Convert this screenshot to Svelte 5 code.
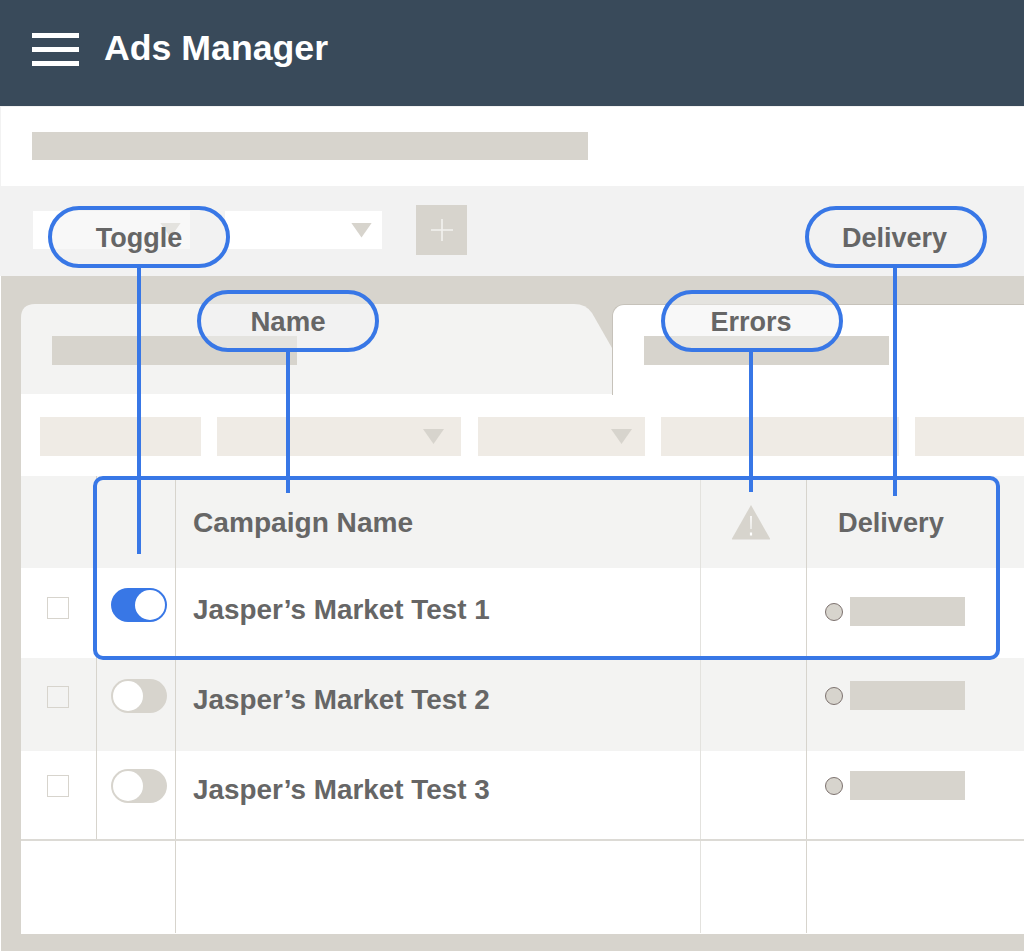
<script>
    const chips = [
        { name: "status", caret: false },
        { name: "objective", caret: true },
        { name: "budget", caret: true },
        { name: "date", caret: false },
        { name: "more", caret: false }
    ];

    const rows = [
        { name: "Jasper’s Market Test 1", on: true },
        { name: "Jasper’s Market Test 2", on: false },
        { name: "Jasper’s Market Test 3", on: false }
    ];

    const callouts = ["Toggle", "Name", "Errors", "Delivery"];
</script>

<div class="page">
    <header class="topbar">
        <div class="burger"><span></span><span></span><span></span></div>
        <h1>Ads Manager</h1>
    </header>

    <section class="title-row">
        <div class="title-bar"></div>
    </section>

    <section class="filter-row">
        <div class="select first"><i class="caret"></i></div>
        <div class="select second"><i class="caret"></i></div>
        <div class="add">
            <svg width="22" height="22" viewBox="0 0 22 22">
                <path d="M0 11H22M11 0V22" stroke="#f3f2ef" stroke-width="1.6" fill="none" />
            </svg>
        </div>
    </section>

    <section class="panel">
        <div class="sheet">
            <div class="tabs">
                <div class="tab back"><div class="ph"></div></div>
                <div class="tab front"><div class="ph"></div></div>
            </div>

            <div class="chips">
                {#each chips as chip}
                    <div class="chip {chip.name}">
                        {#if chip.caret}<i class="caret"></i>{/if}
                    </div>
                {/each}
            </div>

            <div class="table">
                <div class="tr head">
                    <div class="td"></div>
                    <div class="td line"></div>
                    <div class="td line campaign">Campaign Name</div>
                    <div class="td line soft warn">
                        <svg width="40" height="36" viewBox="0 0 40 36">
                            <path d="M20 1 L39 34.5 Q39.4 35.5 38 35.5 L2 35.5 Q.6 35.5 1 34.5 Z" fill="#d7d4cd" />
                            <path d="M19.2 12h1.6l-.3 13h-1z M18.9 28.5h2.2v3h-2.2z" fill="#fff" />
                        </svg>
                    </div>
                    <div class="td line delivery-head">Delivery</div>
                </div>

                {#each rows as row}
                    <div class="tr row">
                        <div class="td"><div class="check"></div></div>
                        <div class="td line"><div class="switch" class:on={row.on}><span></span></div></div>
                        <div class="td line campaign">{row.name}</div>
                        <div class="td line soft"></div>
                        <div class="td line status"><b></b><div class="ph"></div></div>
                    </div>
                {/each}

                <div class="tr foot">
                    <div class="td"></div>
                    <div class="td"></div>
                    <div class="td line"></div>
                    <div class="td line soft"></div>
                    <div class="td line"></div>
                </div>
            </div>
        </div>
    </section>

    <div class="selection"></div>
    {#each callouts as label}
        <div class="callout {label.toLowerCase()}">{label}</div>
    {/each}
</div>

<style>
    :global(body) {
        margin: 0;
    }

    .page {
        position: relative;
        width: 1024px;
        height: 951px;
        overflow: hidden;
        background: #fff;
        font-family: "Liberation Sans", Arial, sans-serif;
        font-weight: 700;
        color: #666;
    }

    .topbar {
        height: 106px;
        box-sizing: border-box;
        display: flex;
        align-items: center;
        gap: 25px;
        padding: 0 0 8px 32px;
        background: #394a5a;
        color: #fff;
    }

    .topbar h1 {
        margin: 0;
        font-size: 35.7px;
        line-height: 1;
    }

    .burger {
        width: 47px;
        display: flex;
        flex-direction: column;
        gap: 9px;
    }

    .burger span {
        height: 5px;
        background: #fff;
    }

    .title-row {
        height: 80px;
        box-sizing: border-box;
        padding: 25px 0 0 31px;
        border-top: 1px solid #f2f2f2;
        border-left: 1px solid #f2f2f2;
    }

    .title-bar {
        width: 556px;
        height: 28px;
        background: #d7d4cd;
    }

    .filter-row {
        height: 90px;
        box-sizing: border-box;
        display: flex;
        align-items: flex-start;
        padding: 19px 0 0 33px;
        background: #f2f2f2;
    }

    .select {
        width: 157px;
        height: 38px;
        margin-top: 6px;
        box-sizing: border-box;
        display: flex;
        align-items: center;
        justify-content: flex-end;
        background: #fff;
    }

    .select.first {
        padding-right: 9px;
        margin-right: 35px;
    }

    .select.second {
        padding-right: 10px;
        margin-right: 34px;
    }

    .add {
        width: 51px;
        height: 50px;
        display: flex;
        align-items: center;
        justify-content: center;
        background: #d7d4cd;
    }

    .add svg {
        display: block;
    }

    .caret {
        display: block;
        width: 21px;
        height: 15px;
        background: #d7d4cd;
        clip-path: polygon(0 0, 100% 0, 50% 100%);
    }

    .panel {
        height: 675px;
        box-sizing: border-box;
        padding: 28px 0 17px 20px;
        margin-left: 1px;
        background: #d7d4cd;
    }

    .sheet {
        height: 100%;
        display: flex;
        flex-direction: column;
        background: #fff;
        border-radius: 12px 0 0 0;
    }

    .tabs {
        height: 90px;
        display: flex;
        background: #d7d4cd;
    }

    .tab {
        height: 90px;
        box-sizing: border-box;
    }

    .tab .ph {
        width: 245px;
        height: 29px;
        background: #d7d4cd;
    }

    .tab.back {
        width: 591px;
        padding: 32px 0 0 31px;
        background: #f3f3f2;
        clip-path: path("M0 90 L0 14 Q0 0 14 0 L553 0 Q565 0 571 9 L591 44 L591 90 Z");
    }

    .tab.front {
        flex: 1;
        padding: 31px 0 0 31px;
        height: 91px;
        background: #fff;
        border-left: 1.5px solid #c6c2ba;
        border-top: 1.5px solid #c6c2ba;
        border-radius: 12px 0 0 0;
    }

    .chips {
        height: 82px;
        box-sizing: border-box;
        display: flex;
        gap: 16px;
        padding: 23px 0 0 19px;
        overflow: hidden;
    }

    .chip {
        flex: none;
        height: 39px;
        box-sizing: border-box;
        display: flex;
        align-items: center;
        justify-content: flex-end;
        background: #efebe5;
    }

    .chip.status { width: 161px; }
    .chip.objective { width: 244px; margin-right: 1px; padding-right: 17px; }
    .chip.budget { width: 167px; padding-right: 13px; }
    .chip.date { width: 238px; }
    .chip.more { width: 120px; }

    .tr {
        display: grid;
        grid-template-columns: 75px 79px 525px 106px 1fr;
        box-sizing: border-box;
        font-size: 27.2px;
    }

    .head {
        height: 92px;
        background: #f3f3f2;
    }

    .row {
        height: 90px;
    }

    .row:nth-child(3) {
        height: 93px;
        background: #f3f3f2;
    }

    .row:nth-child(4) {
        height: 90px;
        border-bottom: 2px solid #dcdad5;
    }

    .foot {
        height: 92px;
    }

    .td {
        position: relative;
        box-sizing: border-box;
        min-width: 0;
    }

    .line {
        border-left: 1px solid #d7d4cd;
    }

    .soft {
        border-left: 1.5px solid #e3e2de;
    }

    .campaign {
        padding-left: 17px;
        line-height: 32px;
        white-space: nowrap;
    }

    .head .campaign {
        padding-top: 31px;
        font-size: 28.1px;
    }

    .row .campaign {
        padding-top: 26px;
        font-size: 27.85px;
    }

    .row:nth-child(4) .campaign {
        padding-top: 23px;
    }

    .warn {
        display: flex;
        justify-content: center;
        padding-top: 28px;
    }

    .warn svg {
        display: block;
        margin-left: -5px;
    }

    .delivery-head {
        padding: 31px 0 0 31px;
        line-height: 32px;
    }

    .check {
        width: 22px;
        height: 22px;
        box-sizing: border-box;
        margin: 29px 0 0 26px;
        border: 1.5px solid #d7d4cd;
    }

    .row:nth-child(3) .check { margin-top: 28px; }
    .row:nth-child(4) .check { margin-top: 24px; }

    .switch {
        width: 56px;
        height: 34px;
        box-sizing: border-box;
        margin: 20px 0 0 14px;
        padding: 2px;
        display: flex;
        border-radius: 17px;
        background: #d7d4cd;
    }

    .row:nth-child(3) .switch { margin-top: 21px; }
    .row:nth-child(4) .switch { margin-top: 18px; }

    .switch span {
        width: 30px;
        height: 30px;
        border-radius: 50%;
        background: #fff;
    }

    .switch.on {
        justify-content: flex-end;
        background: #3877e6;
    }

    .status {
        display: flex;
        gap: 7px;
        padding: 29px 0 0 18px;
    }

    .row:nth-child(3) .status { padding-top: 23px; }
    .row:nth-child(4) .status { padding-top: 20px; }

    .status b {
        flex: none;
        width: 18px;
        height: 18px;
        margin-top: 6px;
        box-sizing: border-box;
        border: 1.5px solid #7d726f;
        border-radius: 50%;
        background: #d7d4cd;
    }

    .status .ph {
        width: 115px;
        height: 29px;
        background: #d7d4cd;
    }

    .selection {
        position: absolute;
        left: 93px;
        top: 476px;
        width: 907px;
        height: 184px;
        box-sizing: border-box;
        border: 4.5px solid #3877e6;
        border-radius: 10px;
    }

    .callout {
        position: absolute;
        width: 182px;
        height: 62px;
        box-sizing: border-box;
        display: flex;
        align-items: center;
        justify-content: center;
        padding-top: 2px;
        border: 4.5px solid #3877e6;
        border-radius: 31px;
        background: rgba(241, 241, 241, 0.5);
        font-size: 27px;
    }

    .callout::after {
        content: "";
        position: absolute;
        top: 100%;
        left: calc(50% - 2.25px + var(--shift, 0px));
        width: 4.5px;
        height: var(--drop);
        background: #3877e6;
    }

    .callout.toggle { left: 48px; top: 206px; --drop: 289.5px; }
    .callout.name { left: 197px; top: 290px; --drop: 144.5px; font-size: 27.6px; }
    .callout.errors { left: 661px; top: 290px; --drop: 143.5px; --shift: -1px; padding-right: 2px; }
    .callout.delivery { left: 805px; top: 206px; --drop: 231.5px; --shift: -1px; padding-right: 3px; }
</style>
